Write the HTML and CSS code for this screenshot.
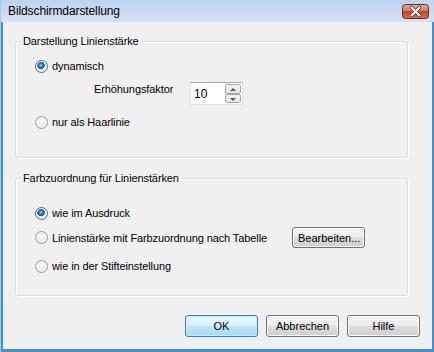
FILE: index.html
```html
<!DOCTYPE html>
<html lang="de">
<head>
  <meta charset="UTF-8">
  <title>Bildschirmdarstellung</title>
  <link rel="stylesheet" href="styles.css">
</head>
<body>
  <div class="window">
    <div class="titlebar">
      <span class="title">Bildschirmdarstellung</span>
      <span class="close-btn">
        <svg width="27" height="15" viewBox="0 0 27 15">
          <defs>
            <linearGradient id="closeGrad" x1="0" y1="0" x2="0" y2="1">
              <stop offset="0" stop-color="#e9a99b"/>
              <stop offset="0.45" stop-color="#d47a64"/>
              <stop offset="0.5" stop-color="#c0442a"/>
              <stop offset="1" stop-color="#d4735a"/>
            </linearGradient>
          </defs>
          <rect x="0.5" y="0.5" width="26" height="14" rx="3" fill="url(#closeGrad)" stroke="#6e2a22"/>
          <path d="M9.5 3.5 L17.5 11.5 M17.5 3.5 L9.5 11.5" stroke="#5a3a36" stroke-width="3.6" stroke-linecap="round"/>
          <path d="M9.5 3.5 L17.5 11.5 M17.5 3.5 L9.5 11.5" stroke="#fff" stroke-width="2" stroke-linecap="round"/>
        </svg>
      </span>
    </div>

    <div class="client">
      <fieldset class="group group-line">
        <legend>Darstellung Linienstärke</legend>
        <label class="option option-first">
          <input type="radio" name="linie" checked>
          <span>dynamisch</span>
        </label>
        <div class="factor-row">
          <span class="factor-label">Erhöhungsfaktor</span>
          <div class="spin">
            <input type="text" class="spin-input" value="10">
            <div class="spin-buttons">
              <span class="spin-btn spin-up"></span>
              <span class="spin-btn spin-down"></span>
            </div>
          </div>
        </div>
        <label class="option option-last">
          <input type="radio" name="linie">
          <span>nur als Haarlinie</span>
        </label>
      </fieldset>

      <fieldset class="group group-color">
        <legend>Farbzuordnung für Linienstärken</legend>
        <label class="option option-first">
          <input type="radio" name="farbe" checked>
          <span>wie im Ausdruck</span>
        </label>
        <div class="option option-table">
          <input type="radio" name="farbe" id="farbe-tabelle">
          <label for="farbe-tabelle" class="table-label">Linienstärke mit Farbzuordnung nach Tabelle</label>
          <button class="btn">Bearbeiten...</button>
        </div>
        <label class="option option-last">
          <input type="radio" name="farbe">
          <span>wie in der Stifteinstellung</span>
        </label>
      </fieldset>

      <div class="actions">
        <button class="btn btn-wide btn-default">OK</button>
        <button class="btn btn-wide">Abbrechen</button>
        <button class="btn btn-wide">Hilfe</button>
      </div>
    </div>
  </div>
</body>
</html>
```

FILE: styles.css
```css
:root {
  --frame: #c6d9ee;
  --frame-edge: #3a93d8;
  --face: #f0f0f0;
  --group-line: #d5dfe5;
  --text: #000;
}
* { box-sizing: border-box; margin: 0; padding: 0; }
body {
  font-family: "Liberation Sans", Arial, sans-serif;
  font-size: 11px;
  letter-spacing: -0.1px;
  color: var(--text);
  background: #fff;
}
.window {
  width: 434px;
  height: 352px;
  display: flex;
  flex-direction: column;
  background: linear-gradient(to bottom, #bfd3ec, #d3e2f4 22px, var(--frame-edge) 22px);
  border-left: 1px solid #a9c6e6;
  padding: 0 2px 3px 2px;
}
.titlebar {
  height: 22px;
  display: flex;
  align-items: center;
  justify-content: space-between;
  padding: 0 3px 1px 5px;
}
.title {
  font-size: 12px;
  letter-spacing: -0.1px;
  color: #000;
}
.close-btn {
  display: flex;
  margin-top: 1px;
}
.client {
  flex: 1;
  background: var(--face);
  padding: 12px 0 0 12px;
}

/* group boxes */
.group {
  width: 393px;
  border: 1px solid var(--group-line);
  border-radius: 3px;
  box-shadow: inset 1px 1px 0 #fff, 1px 1px 0 #fff;
  padding: 0 5px;
}
.group legend {
  padding: 0 2px;
  line-height: 14px;
}
.group-line {
  padding-top: 10px;
  padding-bottom: 27px;
}
.group-color {
  margin-top: 13px;
  padding-top: 20px;
  padding-bottom: 21px;
}

/* radio rows */
.option {
  display: flex;
  align-items: center;
  height: 16px;
  padding-left: 14px;
}
.option span, .table-label {
  margin-left: 4px;
}
.group-line .option-last { margin-top: 10px; }
.option-table {
  height: 21px;
  margin-top: 6px;
}
.group-color .option-last { margin-top: 10px; }
.table-label {
  width: 240px;
}
input[type="radio"] {
  appearance: none;
  width: 13px;
  height: 13px;
  border-radius: 50%;
  border: 1px solid #8f9ea8;
  background: radial-gradient(circle at 50% 40%, #fdfdfd 0, #e2e2e2 70%, #cfcfcf 100%);
  box-shadow: inset 0 0 0 1px #f6f6f6;
  flex: none;
}
input[type="radio"]:checked {
  background:
    radial-gradient(circle at 45% 40%, #aee6ff 0, #2f8fd8 1.5px, #1a4f8e 3.5px, transparent 4px),
    radial-gradient(circle at 50% 40%, #fdfdfd 0, #e2e2e2 70%, #cfcfcf 100%);
  border-color: #556a80;
}

/* factor input */
.factor-row {
  display: flex;
  align-items: flex-start;
  margin-top: 8px;
  height: 22px;
  padding-left: 73px;
}
.factor-label {
  line-height: 14px;
  width: 96px;
}
.spin {
  display: flex;
  width: 53px;
  height: 23px;
  border: 1px solid #abadb3;
  border-right-color: #dbdfe6;
  border-bottom-color: #e3e9ef;
  border-left-color: #e2e3ea;
  background: #fff;
  padding: 1px;
}
.spin-input {
  flex: 1;
  width: 30px;
  border: none;
  outline: none;
  font: inherit;
  font-size: 12px;
  padding-left: 2px;
  background: #fff;
}
.spin-buttons {
  display: flex;
  flex-direction: column;
  width: 16px;
}
.spin-btn {
  flex: 1;
  border: 1px solid #a7a7a7;
  border-radius: 2px;
  background: linear-gradient(to bottom, #f3f3f3, #e6e6e6);
  position: relative;
}
.spin-up::after, .spin-down::after {
  content: "";
  position: absolute;
  left: 4px;
  top: 3px;
  border: 3px solid transparent;
}
.spin-up::after {
  top: 0;
  border-bottom: 3px solid #4b5e78;
}
.spin-down::after {
  top: 3px;
  border-top: 3px solid #4b5e78;
}

/* buttons */
.btn {
  font: inherit;
  color: #000;
  height: 21px;
  border: 1px solid #707070;
  border-radius: 3px;
  background: linear-gradient(to bottom, #f2f2f2 0, #ebebeb 50%, #dddddd 50%, #cfcfcf 100%);
  box-shadow: inset 0 0 0 1px #fcfcfc;
  padding: 0 5px;
}
.option-table .btn {
  width: 73px;
  margin-left: 0;
}
.actions {
  display: flex;
  justify-content: flex-end;
  gap: 8px;
  margin-top: 19px;
  padding-right: 12px;
}
.btn-wide {
  width: 73px;
  height: 22px;
}
.btn-default {
  border-color: #3c7fb1;
  background: linear-gradient(to bottom, #eaf6fd 0, #d9f0fc 50%, #bee6fd 50%, #a7d9f5 100%);
  box-shadow: inset 0 0 0 1px #bdf2ff;
}
```
